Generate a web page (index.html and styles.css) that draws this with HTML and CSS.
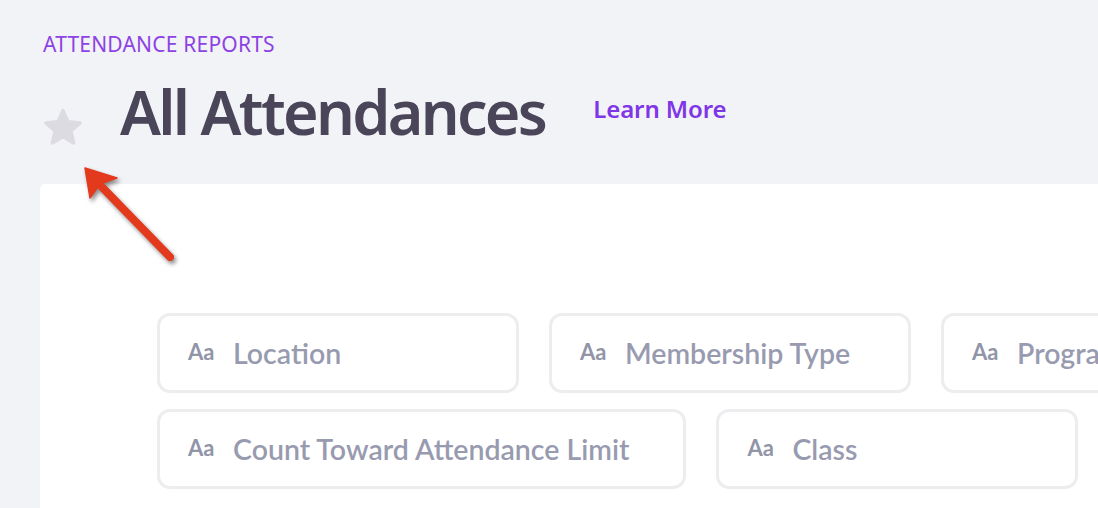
FILE: index.html
```html
<!DOCTYPE html>
<html lang="en">
<head>
    <meta charset="UTF-8">
    <title>All Attendances</title>
    <link rel="stylesheet" href="styles.css">
</head>
<body>
    <div class="page">
        <div class="eyebrow">ATTENDANCE REPORTS</div>
        <div class="title-row">
            <svg class="star" viewBox="0 0 40 40" aria-label="Favorite">
                <path d="M20 3.5 L24.6 14.2 L36.2 15.2 L27.4 22.8 L30.1 34.2 L20 28.1 L9.9 34.2 L12.6 22.8 L3.8 15.2 L15.4 14.2 Z"
                      fill="#dcdbe1" stroke="#dcdbe1" stroke-width="3.5" stroke-linejoin="round"/>
            </svg>
            <h1>All Attendances</h1>
            <a class="learn-more" href="#">Learn More</a>
        </div>

        <div class="card">
            <div class="chips">
                <div class="chip"><span class="chip-type">Aa</span><span class="chip-label">Location</span></div>
                <div class="chip"><span class="chip-type">Aa</span><span class="chip-label">Membership Type</span></div>
                <div class="chip"><span class="chip-type">Aa</span><span class="chip-label">Program</span></div>
                <div class="chip"><span class="chip-type">Aa</span><span class="chip-label">Count Toward Attendance Limit</span></div>
                <div class="chip"><span class="chip-type">Aa</span><span class="chip-label">Class</span></div>
            </div>
        </div>
    </div>

    <!-- annotation arrow pointing at the star -->
    <svg class="arrow" viewBox="0 0 120 120" width="120" height="120">
        <line x1="112" y1="102" x2="40" y2="28" stroke="#e3391c" stroke-width="8" stroke-linecap="round"/>
        <polygon points="27,13 59,23 42,29 32,43" fill="#e3391c" stroke="#e3391c" stroke-width="1.5" stroke-linejoin="round"/>
    </svg>
</body>
</html>
```

FILE: styles.css
```css
body {
    margin: 0;
    background-color: #f2f3f7;
    font-family: "Noto Sans", "Open Sans", sans-serif;
    overflow: hidden;
}
.page {
    padding: 30px 0 0 40px;
}
.eyebrow {
    margin-left: 3px;
    font-size: 21px;
    line-height: 28px;
    color: #8d42e4;
    letter-spacing: 0.2px;
}
.title-row {
    display: flex;
    align-items: center;
    height: 96px;
    margin-top: 2px;
}
.star {
    width: 42px;
    height: 42px;
    margin: 39px 0 0 2px;
}
h1 {
    margin: 6px 0 0 36px;
    font-size: 61px;
    font-weight: 600;
    color: #4a4559;
    letter-spacing: -2.7px;
}
.learn-more {
    margin-left: 48px;
    font-size: 24px;
    font-weight: 600;
    color: #7f36e6;
    text-decoration: none;
    letter-spacing: -0.1px;
}
.card {
    margin-top: 28px;
    background-color: #fff;
    border-radius: 5px 0 0 0;
    height: 400px;
    padding: 129px 0 0 117px;
}
.chips {
    display: flex;
    flex-wrap: wrap;
    gap: 16px 30px;
    width: 1160px;
}
.chip {
    display: flex;
    align-items: center;
    box-sizing: border-box;
    min-width: 362px;
    height: 80px;
    padding: 0 54px 0 28px;
    border: 3px solid #ededf0;
    border-radius: 13px;
    font-family: Lato, sans-serif;
}
.chip-type {
    width: 45px;
    font-size: 22px;
    font-weight: 700;
    color: #9295a8;
    margin-top: -4px;
}
.chip-label {
    font-size: 28.5px;
    font-weight: 600;
    color: #989bb0;
}
.arrow {
    position: absolute;
    left: 58px;
    top: 155px;
    filter: drop-shadow(2px 3px 2px rgba(0, 0, 0, 0.45));
}
```
